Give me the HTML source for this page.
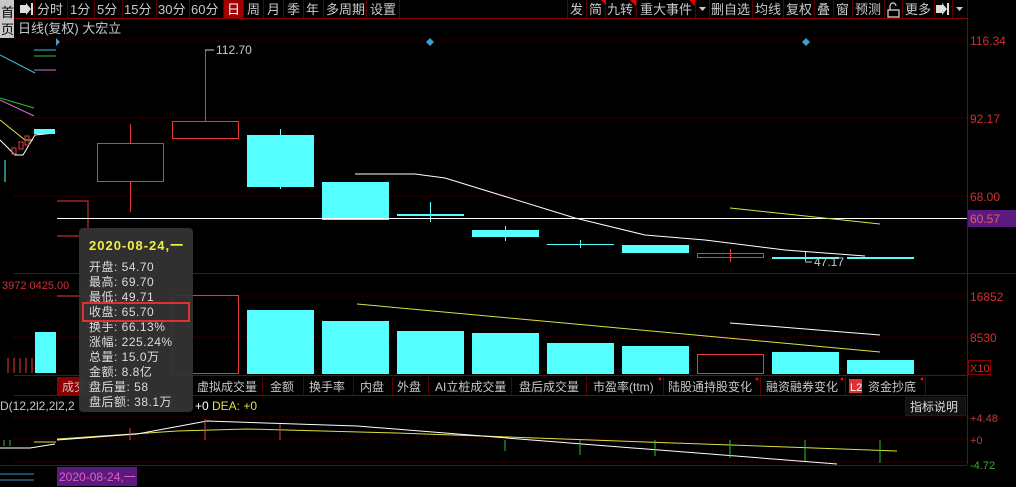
<!DOCTYPE html>
<html><head><meta charset="utf-8"><style>
body{margin:0;background:#000;width:1016px;height:487px;overflow:hidden;font-family:"Liberation Sans","Noto Sans CJK SC",sans-serif}
svg{display:block}
text{font-family:"Liberation Sans","Noto Sans CJK SC",sans-serif}
</style></head><body>
<svg width="1016" height="487" viewBox="0 0 1016 487">
<rect width="1016" height="487" fill="#000"/>
<!-- toolbar -->
<rect x="0" y="0" width="14" height="38" fill="#c8c8c8"/>
<text x="1" y="17" font-size="13" fill="#000">首</text>
<text x="1" y="34" font-size="13" fill="#000">页</text>
<line x1="14" y1="18.5" x2="967" y2="18.5" stroke="#8a0000"/>
<rect x="224" y="0" width="19" height="18" fill="#a00000"/>
<g stroke="#5a0000">
<line x1="34.5" y1="0" x2="34.5" y2="18"/><line x1="67.5" y1="0" x2="67.5" y2="18"/><line x1="94.5" y1="0" x2="94.5" y2="18"/><line x1="122.5" y1="0" x2="122.5" y2="18"/><line x1="156.5" y1="0" x2="156.5" y2="18"/><line x1="189.5" y1="0" x2="189.5" y2="18"/><line x1="223.5" y1="0" x2="223.5" y2="18"/><line x1="243.5" y1="0" x2="243.5" y2="18"/><line x1="263.5" y1="0" x2="263.5" y2="18"/><line x1="283.5" y1="0" x2="283.5" y2="18"/><line x1="303.5" y1="0" x2="303.5" y2="18"/><line x1="323.5" y1="0" x2="323.5" y2="18"/><line x1="366.5" y1="0" x2="366.5" y2="18"/><line x1="399.5" y1="0" x2="399.5" y2="18"/>
<line x1="567.5" y1="0" x2="567.5" y2="18"/><line x1="586.5" y1="0" x2="586.5" y2="18"/><line x1="605.5" y1="0" x2="605.5" y2="18"/><line x1="636.5" y1="0" x2="636.5" y2="18"/><line x1="695.5" y1="0" x2="695.5" y2="18"/><line x1="709.5" y1="0" x2="709.5" y2="18"/><line x1="752.5" y1="0" x2="752.5" y2="18"/><line x1="783.5" y1="0" x2="783.5" y2="18"/><line x1="814.5" y1="0" x2="814.5" y2="18"/><line x1="833.5" y1="0" x2="833.5" y2="18"/><line x1="852.5" y1="0" x2="852.5" y2="18"/><line x1="884.5" y1="0" x2="884.5" y2="18"/><line x1="902.5" y1="0" x2="902.5" y2="18"/><line x1="934.5" y1="0" x2="934.5" y2="18"/><line x1="952.5" y1="0" x2="952.5" y2="18"/><line x1="967.5" y1="0" x2="967.5" y2="18"/>
</g>
<g font-size="13" fill="#c8c8c8">
<path d="M20 5h6v-2l5 6-5 6v-2h-6z M31 3h2v12h-2z" fill="#ddd"/>
<text x="37" y="14">分时</text><text x="70" y="14">1分</text><text x="97" y="14">5分</text><text x="124" y="14">15分</text><text x="158" y="14">30分</text><text x="191" y="14">60分</text>
<text x="227" y="14" fill="#fff">日</text><text x="247" y="14">周</text><text x="267" y="14">月</text><text x="287" y="14">季</text><text x="306" y="14">年</text><text x="326" y="14">多周期</text><text x="370" y="14">设置</text>
<text x="570" y="14">发</text><text x="589" y="14">简</text><text x="607" y="14">九转</text><text x="640" y="14">重大事件</text>
<path d="M699 7h7l-3.5 4z" fill="#ccc"/>
<text x="711" y="14">删自选</text><text x="755" y="14">均线</text><text x="786" y="14">复权</text><text x="817" y="14">叠</text><text x="836" y="14">窗</text><text x="855" y="14">预测</text>
<path d="M888 10h11v7h-11z M890 10v-4a3 3 0 0 1 6 0" fill="none" stroke="#ddd" stroke-width="1.2"/>
<text x="905" y="14">更多</text>
<path d="M936 5h6v-2l5 6-5 6v-2h-6z M947 3h2v12h-2z" fill="#ddd"/>
<path d="M956 7h7l-3.5 4z" fill="#ccc"/>
</g>
<path d="M601 0h5v5z M630 0h6v6z M689 0h6v6z" fill="#e00"/>
<text x="18" y="33" font-size="13" fill="#c8c8c8">日线(复权)  大宏立</text>
<!-- frame -->
<line x1="967.5" y1="18" x2="967.5" y2="465" stroke="#8a0000"/>
<line x1="14" y1="273.5" x2="1016" y2="273.5" stroke="#8a0000"/>
<line x1="14" y1="375.5" x2="967" y2="375.5" stroke="#8a0000"/>
<line x1="14" y1="395.5" x2="967" y2="395.5" stroke="#8a0000"/>
<line x1="0" y1="465.5" x2="967" y2="465.5" stroke="#8a0000"/>
<g stroke="#7a0000" stroke-dasharray="1,3">
<line x1="14" y1="40" x2="967" y2="40"/><line x1="14" y1="118" x2="967" y2="118"/><line x1="14" y1="196" x2="967" y2="196"/>
<line x1="14" y1="296" x2="967" y2="296"/><line x1="14" y1="337" x2="967" y2="337"/>
<line x1="14" y1="417" x2="967" y2="417"/><line x1="14" y1="439" x2="967" y2="439"/><line x1="14" y1="462" x2="967" y2="462"/>
</g>
<!-- axis labels -->
<g font-size="12" fill="#d03030">
<text x="970" y="45">116.34</text><text x="970" y="123">92.17</text><text x="970" y="201">68.00</text>
<text x="970" y="301">16852</text><text x="970" y="342">8530</text>
</g>
<rect x="968" y="210" width="48" height="17" fill="#5a1a80"/>
<text x="970" y="223" font-size="12" fill="#e06060">60.57</text>
<rect x="968.5" y="360.5" width="22" height="14" fill="none" stroke="#8a0000"/>
<text x="970" y="372" font-size="11" fill="#d03030">X10</text>
<text x="970" y="422" font-size="11" fill="#d03030">+4.48</text>
<text x="970" y="444" font-size="11" fill="#d03030">+0</text>
<text x="970" y="469" font-size="11" fill="#30b030">-4.72</text>
<!-- diamonds -->
<path d="M430 38l4 4-4 4-4-4z M806 38l4 4-4 4-4-4z" fill="#3aa0d0"/>
<path d="M56 38v8l4-4z" fill="#3aa0d0"/>
<!-- left mini -->
<g fill="none" stroke-width="1">
<path d="M0 55l35 18" stroke="#40c0d0"/><path d="M34 50h22" stroke="#40c0d0"/><path d="M34 56h22" stroke="#30c030"/><path d="M34 70h22" stroke="#d070d0"/>
<path d="M0 98l34 10" stroke="#30c030"/><path d="M0 100l34 16" stroke="#d070d0"/>
<path d="M0 120l25 20 8 0" stroke="#e0e040"/>
<path d="M0 140l15 15 8 0 12-20 20-2" stroke="#fff"/>
<rect x="34" y="129" width="21" height="5" fill="#5ff" stroke="none"/>
<rect x="12" y="148" width="4" height="6" stroke="#e04040"/><rect x="19" y="142" width="4" height="7" stroke="#e04040"/><rect x="25" y="136" width="4" height="9" stroke="#e04040"/>
<path d="M5 160v22" stroke="#5ff"/>
</g>
<!-- price candles -->
<g fill="none" stroke="#e83838">
<path d="M57 201h31v27 M57 236h22"/>
<rect x="97.5" y="143.5" width="66" height="38"/><path d="M130.5 124v19 M130.5 182v30"/>
<rect x="172.5" y="121.5" width="66" height="17"/><path d="M205.5 50v71"/>
<rect x="697.5" y="253.5" width="66" height="4"/><path d="M730.5 249v13"/>
</g>
<path d="M205 50h9" stroke="#ccc"/>
<text x="216" y="54" font-size="12" fill="#c8c8c8">112.70</text>
<g fill="#5ff">
<rect x="247" y="135" width="67" height="52"/><rect x="280" y="129" width="1" height="60"/>
<rect x="322" y="182" width="67" height="38"/>
<rect x="397" y="214" width="67" height="2"/><rect x="430" y="202" width="1" height="20"/>
<rect x="472" y="230" width="67" height="7"/><rect x="505" y="226" width="1" height="15"/>
<rect x="547" y="244" width="67" height="1"/><rect x="580" y="240" width="1" height="8"/>
<rect x="622" y="245" width="67" height="8"/>
<rect x="772" y="257" width="67" height="2"/><rect x="805" y="251" width="1" height="10"/>
<rect x="847" y="257" width="67" height="2"/>
</g>
<line x1="57" y1="218.5" x2="967" y2="218.5" stroke="#fff"/>
<path d="M355 174h60l30 4 130 40 70 17 60 5 80 10 80 6" fill="none" stroke="#fff"/>
<path d="M730 208l150 16" fill="none" stroke="#e0e040"/>
<path d="M805 262h7" stroke="#ccc"/><text x="814" y="266" font-size="12" fill="#c8c8c8">47.17</text>
<!-- volume -->
<text x="2" y="289" font-size="11" fill="#d03030">3972 0425.00</text>
<rect x="35" y="332" width="21" height="41" fill="#5ff"/>
<g fill="none" stroke="#e83838">
<path d="M57 296h31v77"/>
<rect x="172.5" y="295.5" width="66" height="78"/>
<rect x="697.5" y="354.5" width="66" height="19"/>
<path d="M8 358v15 M14 358v15 M20 358v15 M26 358v15 M32 358v15"/>
</g>
<g fill="#5ff">
<rect x="247" y="310" width="67" height="64"/><rect x="322" y="321" width="67" height="53"/><rect x="397" y="331" width="67" height="43"/><rect x="472" y="333" width="67" height="41"/><rect x="547" y="343" width="67" height="31"/><rect x="622" y="346" width="67" height="28"/><rect x="772" y="352" width="67" height="22"/><rect x="847" y="360" width="67" height="14"/>
</g>
<path d="M357 304l523 48" stroke="#e0e040" fill="none"/>
<path d="M730 323l150 12" stroke="#fff" fill="none"/>
<!-- tabs -->
<rect x="57" y="377" width="30" height="18" fill="#8a0000"/>
<g stroke="#5a0000"><line x1="262.5" y1="377" x2="262.5" y2="395"/><line x1="303.5" y1="377" x2="303.5" y2="395"/><line x1="353.5" y1="377" x2="353.5" y2="395"/><line x1="392.5" y1="377" x2="392.5" y2="395"/><line x1="428.5" y1="377" x2="428.5" y2="395"/><line x1="511.5" y1="377" x2="511.5" y2="395"/><line x1="586.5" y1="377" x2="586.5" y2="395"/><line x1="663.5" y1="377" x2="663.5" y2="395"/><line x1="760.5" y1="377" x2="760.5" y2="395"/><line x1="845.5" y1="377" x2="845.5" y2="395"/><line x1="925.5" y1="377" x2="925.5" y2="395"/></g>
<g font-size="12" fill="#c8c8c8">
<text x="62" y="391">成交量</text><text x="197" y="391">虚拟成交量</text><text x="270" y="391">金额</text><text x="309" y="391">换手率</text><text x="360" y="391">内盘</text><text x="397" y="391">外盘</text><text x="435" y="391">AI立桩成交量</text><text x="519" y="391">盘后成交量</text><text x="593" y="391">市盈率(ttm)</text><text x="668" y="391">陆股通持股变化</text><text x="766" y="391">融资融券变化</text><text x="868" y="391">资金抄底</text>
</g>
<rect x="849" y="379" width="13" height="14" fill="#e03030"/><text x="850" y="391" font-size="11" fill="#fff">L2</text>
<g fill="#e00"><circle cx="660" cy="379" r="1.5"/><circle cx="757" cy="379" r="1.5"/><circle cx="842" cy="379" r="1.5"/><circle cx="922" cy="379" r="1.5"/></g>
<!-- macd -->
<text x="0" y="410" font-size="12" fill="#c8c8c8">D(12,2l2,2l2,2</text>
<text x="195" y="410" font-size="12" fill="#fff">+0</text><text x="212" y="410" font-size="12" fill="#e0e040">DEA: +0</text>
<rect x="905.5" y="397.5" width="60" height="18" fill="#111" stroke="#5a0000"/>
<text x="910" y="411" font-size="12" fill="#ddd">指标说明</text>
<path d="M57 439l120-8 70-2 150 4 500 18" stroke="#e0e040" fill="none"/>
<path d="M57 440l80-6 70-13 150 5 200 16 280 22" stroke="#fff" fill="none"/>
<g stroke="#e04040"><path d="M130 428v12 M205 419v21 M280 424v16"/></g>
<g stroke="#30c030"><path d="M505 440v11 M580 440v15 M655 440v16 M730 440v18 M805 440v21 M880 440v23 M4 440v6 M10 440v6"/></g>
<path d="M0 448h30l25-4" stroke="#fff" fill="none"/><path d="M34 442h22" stroke="#e0e040"/>
<!-- bottom date -->
<rect x="57" y="467" width="80" height="19" fill="#5a1a80"/>
<text x="59" y="481" font-size="12" fill="#e060c0">2020-08-24,一</text>
<path d="M0 474h34 M0 480h34" stroke="#3a90d0"/>
<!-- tooltip -->
<rect x="79" y="228" width="114" height="184" rx="4" fill="#333" opacity="0.95"/>
<text x="89" y="250" font-size="13" font-weight="bold" fill="#f0f040" letter-spacing="1">2020-08-24,一</text>
<g font-size="12" fill="#ddd" letter-spacing="0.5">
<text x="89" y="271">开盘: 54.70</text><text x="89" y="286">最高: 69.70</text><text x="89" y="301">最低: 49.71</text><text x="89" y="316">收盘: 65.70</text><text x="89" y="331">换手: 66.13%</text><text x="89" y="346">涨幅: 225.24%</text><text x="89" y="361">总量: 15.0万</text><text x="89" y="376">金额: 8.8亿</text><text x="89" y="391">盘后量: 58</text><text x="89" y="406">盘后额: 38.1万</text>
</g>
<rect x="83" y="303" width="106" height="18" fill="none" stroke="#e03030" stroke-width="2"/>
</svg>
</body></html>
